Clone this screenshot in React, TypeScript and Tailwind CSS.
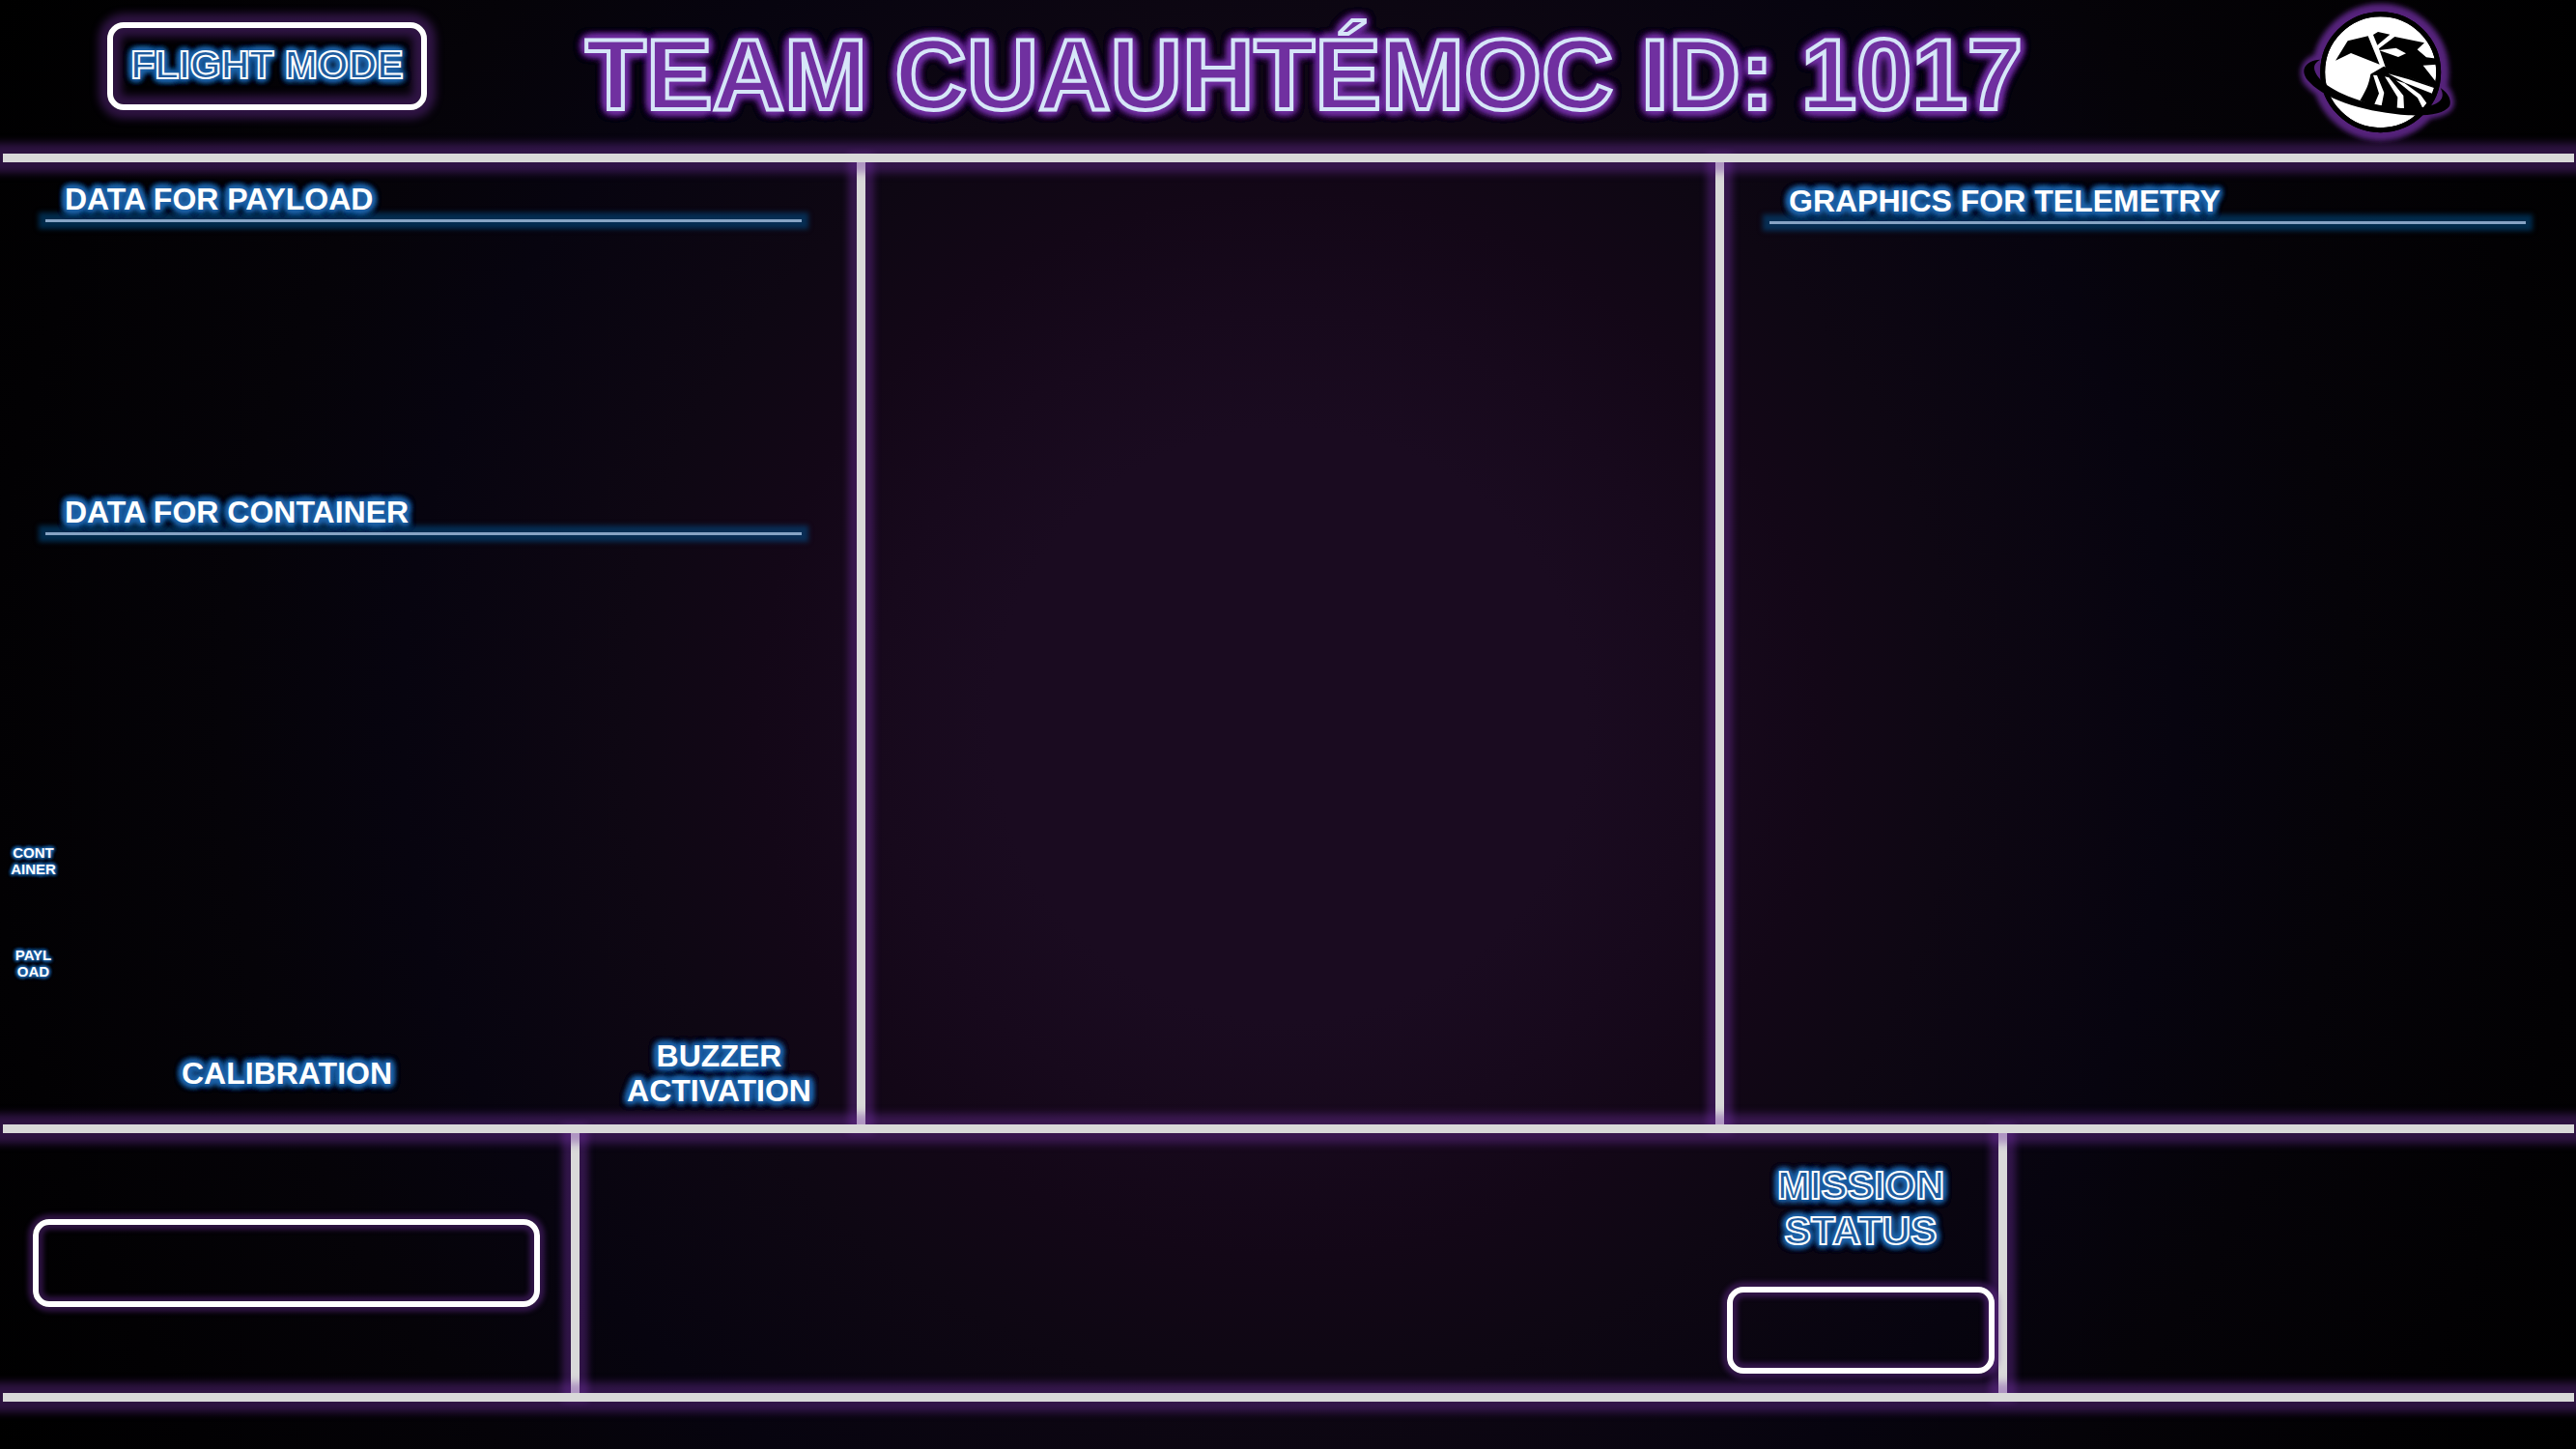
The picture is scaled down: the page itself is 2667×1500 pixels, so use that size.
import type { ReactNode } from "react";

const GLOW_BLUE =
  "[text-shadow:0_0_4px_#1f63a8,0_0_4px_#1f63a8,0_0_6px_#1f63a8,0_0_6px_#1f63a8,0_0_8px_#1f63a8,0_0_8px_#1f63a8,0_0_8px_#1f63a8,0_0_8px_#1f63a8,0_0_8px_#1f63a8,0_0_8px_#1f63a8,0_0_8px_#1f63a8]";
const GLOW_SMALL =
  "[text-shadow:0_0_2px_#1f63a8,0_0_2px_#1f63a8,0_0_4px_#1f63a8,0_0_4px_#1f63a8,0_0_4px_#1f63a8,0_0_4px_#1f63a8,0_0_4px_#1f63a8]";
const GLOW_PURPLE =
  "[text-shadow:0_0_6px_#7030a0,0_0_6px_#7030a0,0_0_8px_#7030a0,0_0_8px_#7030a0,0_0_10px_#7030a0,0_0_10px_#7030a0,0_0_12px_#7030a0,0_0_12px_#7030a0,0_0_12px_#7030a0,0_0_12px_#7030a0,0_0_12px_#7030a0,0_0_12px_#7030a0,0_0_12px_#7030a0]";
const OUTLINE_BLUE = "text-[#1f5c9e] [-webkit-text-stroke:2px_#ffffff]";
const BOX_GLOW =
  "shadow-[0_0_5px_5px_rgba(112,48,160,0.4),inset_0_0_5px_5px_rgba(112,48,160,0.4)]";

function HorizontalBar() {
  return (
    <div
      role="separator"
      className="relative z-10 ml-[3px] mr-[2px] h-[9px] shrink-0 bg-[#d9d9d9] shadow-[0_0_8px_11px_rgba(112,48,160,0.4)]"
    />
  );
}

function VerticalBar() {
  return (
    <div
      role="separator"
      aria-orientation="vertical"
      className="bg-[#d9d9d9] shadow-[0_0_7px_9px_rgba(112,48,160,0.4)]"
    />
  );
}

function SectionHeading({ children }: { children: ReactNode }) {
  return (
    <div className="w-full">
      <h2 className={`px-5 text-[32px] leading-[36px] font-bold whitespace-nowrap text-white ${GLOW_BLUE}`}>
        {children}
      </h2>
      <div className="mt-[3px] h-[3px] bg-[#86a3c4] shadow-[0_0_5px_7px_rgba(0,85,150,0.5)]" />
    </div>
  );
}

function Logo() {
  return (
    <svg
      viewBox="0 0 600 450"
      className="h-[150px] w-[200px] shrink-0 self-start overflow-visible"
      role="img"
      aria-label="Team logo"
    >
      <defs>
        <filter id="halo" x="-20%" y="-20%" width="140%" height="140%">
          <feGaussianBlur stdDeviation="8" />
        </filter>
      </defs>
      <g filter="url(#halo)" fill="#54247a" stroke="#54247a" strokeLinejoin="round">
        <circle cx="314" cy="224" r="186" strokeWidth="54" />
        <path
          d="M124 188C96 192 78 214 90 244C130 300 260 342 380 352C480 354 522 338 522 318C520 298 514 286 504 278L490 322L140 272Z"
          strokeWidth="42"
        />
      </g>
      <circle cx="314" cy="224" r="180" fill="#fff" stroke="#000" strokeWidth="15" />
      <path d="M174 188L212 127L275 112L311 200L222 165Z" />
      <path d="M291 108L306 99L343 107L304 140Z" />
      <path d="M309 151L358 114L450 133L428 154L456 178L490 182L489 200L446 203L486 254L482 272L330 211Z" />
      <path d="M309 156L362 149L393 166L369 177Z" fill="#fff" />
      <path d="M283 230L324 206L485 272L478 300L440 360L330 345L250 312C268 282 278 262 283 230Z" />
      <path
        d="M291 233L303 234L325 288L317 328L295 323L309 290ZM327 238L340 241L385 297L387 337L365 335L367 302ZM338 229L400 246L480 273L474 290L390 257ZM362 250L388 258L438 294L457 320L445 336L429 304Z"
        fill="#fff"
      />
      <path d="M127 185C98 200 104 224 136 256C190 300 310 342 420 336C484 332 522 314 500 273C526 290 536 314 528 330C512 352 470 360 400 358C280 350 150 316 94 256C60 222 76 188 127 185Z" />
      <circle cx="314" cy="224" r="180" fill="none" stroke="#000" strokeWidth="15" />
    </svg>
  );
}

export default function App() {
  return (
    <div className="flex min-h-screen flex-col overflow-hidden bg-black bg-[radial-gradient(circle_at_center,#1a0b20_0%,#1a0b20_20%,#17091c_28%,#130717_36%,#0e0713_45%,#07040f_60%,#050308_72%,#020103_88%,#000000_100%)] font-['Liberation_Sans',Arial,sans-serif]">
      <header className="flex h-[159px] shrink-0 items-center pr-[107px] pl-[111px]">
        <button
          type="button"
          className={`mb-[23px] h-[91px] w-[331px] shrink-0 rounded-[17px] border-[6px] border-white pb-[3px] text-[41px] leading-[44px] font-bold whitespace-nowrap shadow-[0_0_9px_9px_rgba(112,48,160,0.4),inset_0_0_9px_9px_rgba(112,48,160,0.4)] ${OUTLINE_BLUE} ${GLOW_BLUE}`}
        >
          FLIGHT MODE
        </button>
        <h1
          className={`mb-[4px] flex-1 pr-[102px] text-center text-[103px] leading-[114px] font-bold whitespace-nowrap text-[#7030a0] [-webkit-text-stroke:4px_#d6e6f8] ${GLOW_PURPLE}`}
        >
          TEAM CUAUHTÉMOC ID: 1017
        </h1>
        <Logo />
      </header>

      <HorizontalBar />

      <main className="grid flex-1 grid-cols-[minmax(0,887fr)_9px_minmax(0,880fr)_9px_minmax(0,882fr)]">
        <section className="flex flex-col">
          <div className="h-[324px] shrink-0 pt-[20px] pr-[57px] pl-[47px]">
            <SectionHeading>DATA FOR PAYLOAD</SectionHeading>
          </div>
          <div className="shrink-0 pt-[20px] pr-[57px] pl-[47px]">
            <SectionHeading>DATA FOR CONTAINER</SectionHeading>
          </div>
          <div className={`mt-[320px] flex w-[69px] flex-col gap-[72px] text-center text-[15px] leading-[17px] font-bold text-white ${GLOW_SMALL}`}>
            <p>
              CONT
              <br />
              AINER
            </p>
            <p>
              PAYL
              <br />
              OAD
            </p>
          </div>
          <div className={`mt-auto grid grid-cols-[minmax(0,594fr)_minmax(0,293fr)] items-center pb-[17px] text-center text-[32px] leading-[36px] font-bold text-white ${GLOW_BLUE}`}>
            <h3>CALIBRATION</h3>
            <h3 className="pl-2">
              BUZZER
              <br />
              ACTIVATION
            </h3>
          </div>
        </section>
        <VerticalBar />
        <section aria-label="Main view" />
        <VerticalBar />
        <section className="pt-[22px] pr-[52px] pl-[47px]">
          <SectionHeading>GRAPHICS FOR TELEMETRY</SectionHeading>
        </section>
      </main>

      <HorizontalBar />

      <footer className="grid h-[269px] shrink-0 grid-cols-[minmax(0,591fr)_9px_minmax(0,1469fr)_9px_minmax(0,589fr)]">
        <div className="flex items-center pr-[32px] pl-[34px]">
          <input
            type="text"
            aria-label="Calibration"
            className={`h-[91px] w-full rounded-[17px] border-[6px] border-white bg-transparent px-5 text-[32px] text-white outline-none ${BOX_GLOW}`}
          />
        </div>
        <VerticalBar />
        <div className="z-10 flex justify-end pr-1">
          <div className="flex w-[277px] flex-col pt-[31px]">
            <label
              htmlFor="mission-status"
              className={`text-center text-[41px] leading-[47px] font-bold ${OUTLINE_BLUE} ${GLOW_BLUE}`}
            >
              MISSION
              <br />
              STATUS
            </label>
            <input
              id="mission-status"
              type="text"
              className={`mt-[34px] h-[90px] w-full rounded-[17px] border-[6px] border-white bg-transparent px-5 text-[32px] text-white outline-none ${BOX_GLOW}`}
            />
          </div>
        </div>
        <VerticalBar />
        <div />
      </footer>

      <HorizontalBar />
      <div className="h-[49px] shrink-0" />
    </div>
  );
}
